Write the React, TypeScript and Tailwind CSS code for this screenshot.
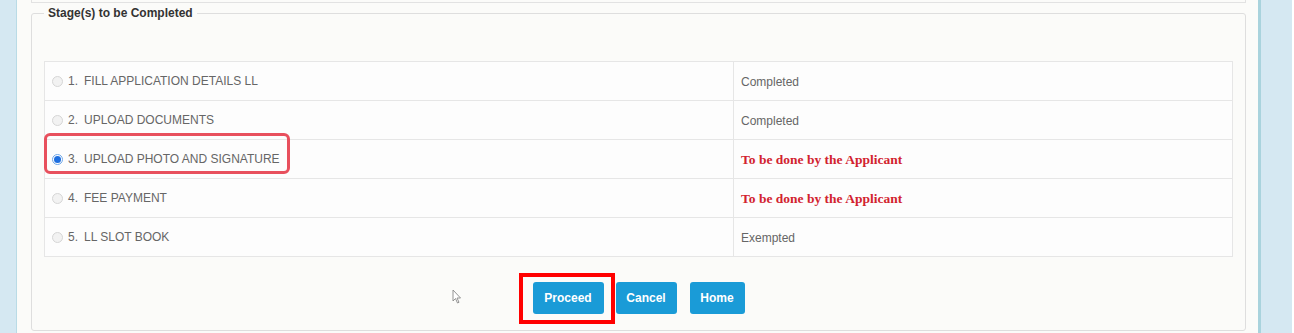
import React from "react";

const rows = [
  { n: "1.", label: "FILL APPLICATION DETAILS LL", status: "Completed", red: false, checked: false },
  { n: "2.", label: "UPLOAD DOCUMENTS", status: "Completed", red: false, checked: false },
  { n: "3.", label: "UPLOAD PHOTO AND SIGNATURE", status: "To be done by the Applicant", red: true, checked: true },
  { n: "4.", label: "FEE PAYMENT", status: "To be done by the Applicant", red: true, checked: false },
  { n: "5.", label: "LL SLOT BOOK", status: "Exempted", red: false, checked: false },
];

function Radio({ checked }: { checked: boolean }) {
  if (checked) {
    return (
      <span className="inline-flex h-[11px] w-[11px] items-center justify-center rounded-full border border-[#6fa7e8] bg-white">
        <span className="h-[7px] w-[7px] rounded-full bg-[#1e6fe0]" />
      </span>
    );
  }
  return <span className="inline-block h-[11px] w-[11px] rounded-full border border-[#d6d6d6] bg-[#f2f2f2]" />;
}

export default function App() {
  return (
    <div
      className="flex h-[333px] w-[1294px] overflow-hidden bg-[#fbfbf9]"
      style={{ fontFamily: '"Liberation Sans", Arial, sans-serif' }}
    >
      <div className="h-full w-[17px] shrink-0 border-r border-[#b9dbe6] bg-[#d5e8f2]" />
      <div className="flex w-[1241px] shrink-0 flex-col pl-[14px] pr-[12px]">
        <div className="h-[3px] w-[1215px] border-x border-b border-[#e2e2e2]" />
        <fieldset className="relative mt-[2px] h-[326px] w-[1215px] rounded-[3px] border border-[#dedede] px-[12px] pt-[40px]">
          <legend className="px-[4px] text-[12px] font-bold leading-[16px] text-[#333]">
            Stage(s) to be Completed
          </legend>
          <div className="relative">
            <table className="w-[1189px] border-collapse border border-[#e6e6e6] bg-[#fdfdfd]">
              <tbody>
                {rows.map((r) => (
                  <tr key={r.n} className="h-[39px] border-b border-[#e6e6e6]">
                    <td className="w-[689px] border-r border-[#e6e6e6] pl-[7px] align-middle">
                      <div className="flex items-center text-[12px] text-[#666]">
                        <Radio checked={r.checked} />
                        <span className="ml-[5px] w-[16px]">{r.n}</span>
                        <span>{r.label}</span>
                      </div>
                    </td>
                    <td className="pl-[7px] align-middle">
                      {r.red ? (
                        <span
                          className="text-[13.5px] font-bold text-[#d2232f]"
                          style={{ fontFamily: '"Liberation Serif", "Times New Roman", serif' }}
                        >
                          {r.status}
                        </span>
                      ) : (
                        <span className="text-[12px] text-[#666]">{r.status}</span>
                      )}
                    </td>
                  </tr>
                ))}
              </tbody>
            </table>
            <div className="pointer-events-none absolute left-0 top-[72px] h-[41px] w-[246px] rounded-[6px] border-[3px] border-[#e8505d]" />
          </div>
          <div className="relative mt-[25px] flex justify-center gap-[12px]">
            <div className="relative">
              <button className="h-[32px] w-[71px] rounded-[3px] bg-[#1a9bd7] text-[12px] font-bold text-white">
                Proceed
              </button>
              <div className="pointer-events-none absolute -left-[14px] -top-[9px] h-[51px] w-[96px] border-[4px] border-[#ff0000]" />
            </div>
            <button className="h-[32px] w-[61px] rounded-[3px] bg-[#1a9bd7] text-[12px] font-bold text-white">
              Cancel
            </button>
            <button className="ml-[1px] h-[32px] w-[55px] rounded-[3px] bg-[#1a9bd7] text-[12px] font-bold text-white">
              Home
            </button>
            <svg
              className="absolute left-[408px] top-[7px]"
              width="10"
              height="15"
              viewBox="0 0 10 15"
            >
              <path d="M1 1 L1 12 L3.5 9.5 L5.5 14 L7 13.3 L5 9 L8.5 9 Z" fill="#fff" stroke="#888" strokeWidth="0.9" />
            </svg>
          </div>
        </fieldset>
      </div>
      <div className="h-full w-[34px] shrink-0 border-l-[3px] border-[#a9d3dd] bg-[#d5e8f2]" />
      <div className="h-full flex-1 bg-white" />
    </div>
  );
}
